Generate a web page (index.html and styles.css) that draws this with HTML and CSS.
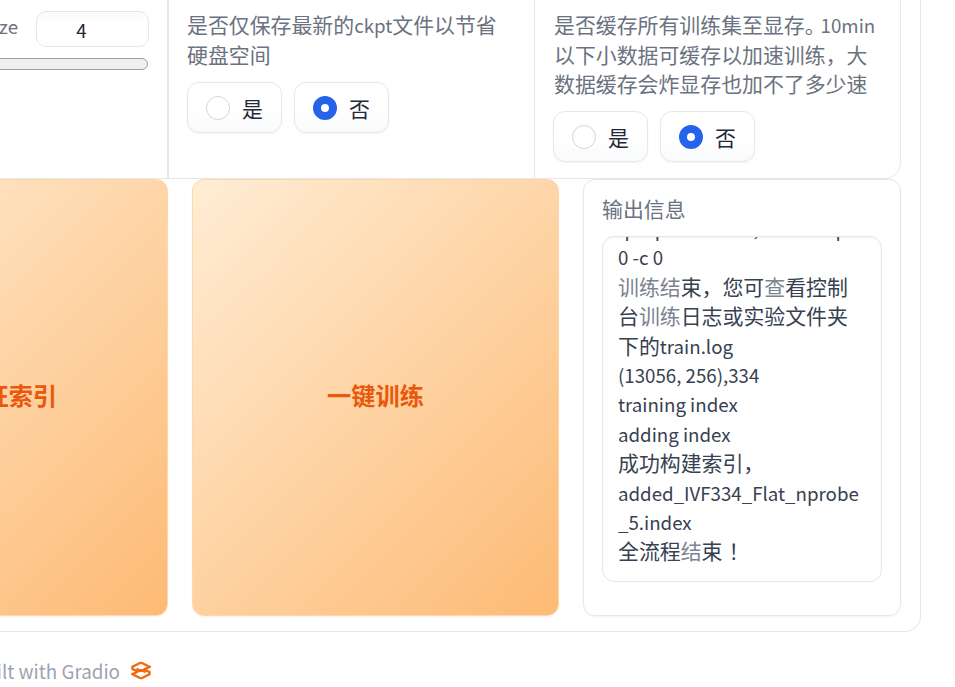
FILE: index.html
```html
<!DOCTYPE html>
<html lang="zh">
<head>
<meta charset="utf-8">
<title>Gradio</title>
<link rel="stylesheet" href="styles.css">
</head>
<body>
<main class="panel">
  <section class="settings">
    <div class="cell cell-slider">
      <div class="slider-head">
        <span class="slider-label">batch_size</span>
        <input class="number" type="text" value="4">
      </div>
      <div class="track"></div>
    </div>
    <div class="cell cell-mid">
      <p class="info">是否仅保存最新的<span class="en">ckpt</span>文件以节省硬盘空间</p>
      <div class="radios">
        <label class="radio"><span class="dot"></span>是</label>
        <label class="radio"><span class="dot on"></span>否</label>
      </div>
    </div>
    <div class="cell cell-last">
      <p class="info">是否缓存所有训练集至显存<span class="stop">。</span><span class="en">10min</span>以下小数据可缓存以加速训练，大数据缓存会炸显存也加不了多少速</p>
      <div class="radios">
        <label class="radio"><span class="dot"></span>是</label>
        <label class="radio"><span class="dot on"></span>否</label>
      </div>
    </div>
  </section>
  <section class="actions">
    <button class="big">训练特征索引</button>
    <button class="big">一键训练</button>
    <div class="output">
      <span class="out-label">输出信息</span>
      <div class="log">
        <div class="log-inner"><span class="en">-p 0 p 00000000, 0000000p</span>
<span class="en">0 -c 0</span>
<span class="thin">训练结</span>束，您可<span class="thin">查</span>看控制
台<span class="thin">训练</span>日志或实验文件夹
下的<span class="en">train.log</span>
<span class="en">(13056, 256),334</span>
<span class="en">training index</span>
<span class="en">adding index</span>
成功构建索引，
<span class="en">added_IVF334_Flat_nprobe</span>
<span class="en">_5.index</span>
全流程<span class="thin">结</span>束<span class="bang">！</span></div>
      </div>
    </div>
  </section>
</main>
<footer class="foot">
  <span class="built">Built with Gradio</span>
  <svg class="logo" width="20" height="19" viewBox="0 0 20 19" fill="none" stroke="#f2690d" stroke-width="2.400">
    <path d="M10 1.500 18.500 5.800 10 10 5.500 7.800"/>
    <path d="M10 17.500 1.500 13.200 10 9 14.500 11.200"/>
    <path d="M10 1.500 1.500 5.800 1.500 8 6 10.200"/>
    <path d="M10 17.500 18.500 13.200 18.500 11 14 8.800"/>
  </svg>
</footer>
</body>
</html>
```

FILE: styles.css
```css
* { box-sizing: border-box; }
html, body { margin: 0; height: 687px; overflow: hidden; background: #fff; }
body {
  font-family: "Noto Sans CJK JP", "Noto Sans CJK SC", "Noto Sans", sans-serif;
  font-size: 20.900px;
  color: #1f2937;
}
.en { font-size: 18.700px; line-height: 1; }
.thin { color: #7b8290; }
.stop { margin-right: -5px; }
.bang { margin-left: 6px; }
.panel {
  width: 1120px;
  margin: -20px 0 0 -199px;
  height: 652px;
  padding: 0 19px 15px 0;
  border: 1px solid #e5e7eb;
  border-width: 0 1px 1px 0;
  border-radius: 0 0 16px 0;
  display: flex;
  flex-direction: column;
}
.settings {
  display: flex;
  height: 199px;
  border: 1px solid #e5e7eb;
  border-radius: 0 0 16px 16px;
  flex: none;
}
.cell { padding: 29px 18px 0; min-width: 0; }
.cell-slider { flex: 0 0 365px; padding: 30px 18px 0 0; }
.cell-mid { flex: 0 0 367px; border-left: 2px solid #e5e7eb; }
.cell-last { flex: 1; border-left: 1px solid #e5e7eb; padding-left: 19px; }
.slider-head { display: flex; justify-content: flex-end; align-items: center; gap: 18px; }
.slider-label { color: #6b7280; font-size: 18.700px; position: relative; top: -4px; }
.number {
  width: 113px;
  height: 36px;
  padding: 0 22px 0 0;
  border: 1px solid #e5e7eb;
  border-radius: 10px;
  text-align: center;
  font: inherit;
  font-size: 18.700px;
  color: #1f2937;
  background: linear-gradient(#fbfbfc, #fff 40%);
}
.track {
  height: 12px;
  margin: 11px 1px 0 0;
  background: #efefef;
  border: 1px solid #a0a0a0;
  border-radius: 6px;
}
.info {
  margin: 0;
  color: #6b7280;
  line-height: 29.500px;
}
.radios { display: flex; gap: 12px; margin-top: 13px; }
.cell-last .radios { margin-left: -1px; margin-top: 12.500px; }
.radio {
  display: flex;
  align-items: center;
  gap: 12px;
  width: 95px;
  height: 51px;
  padding: 0 0 0 18px;
  border: 1px solid #e5e7eb;
  border-radius: 12px;
  background: linear-gradient(#fff 50%, #f9fafb);
  box-shadow: 0 1px 2px rgba(0,0,0,.05);
  color: #1f2937;
}
.dot {
  width: 24px;
  height: 24px;
  border-radius: 50%;
  border: 1px solid #d1d5db;
  background: #fff;
}
.dot.on { border: 8px solid #2563eb; }
.actions {
  display: flex;
  gap: 24px;
  flex: 1;
  min-height: 0;
}
.big {
  flex: 0 0 367px;
  padding: 0 0 6px;
  border: 1px solid #fed7aa;
  border-radius: 12px;
  background: linear-gradient(135deg, #ffedd5, #fdba74);
  color: #ea580c;
  font: inherit;
  font-size: 24.200px;
  font-weight: 700;
  box-shadow: 0 1px 2px rgba(0,0,0,.05);
}
.output {
  flex: 1;
  padding: 14px 18px 0;
  border: 1px solid #e5e7eb;
  border-radius: 12px;
  box-shadow: 0 1px 2px rgba(0,0,0,.05);
  display: flex;
  flex-direction: column;
}
.out-label { color: #6b7280; line-height: 29px; margin-bottom: 13px; }
.log {
  height: 346px;
  border: 1px solid #e5e7eb;
  border-radius: 12px;
  overflow: hidden;
  box-shadow: inset 0 1px 2px rgba(0,0,0,.05);
}
.log-inner {
  margin-top: -24px;
  padding: 0 15px;
  white-space: pre;
  line-height: 29.400px;
  color: #374151;
}
.foot {
  display: flex;
  align-items: center;
  gap: 11px;
  height: 35px;
  margin: 21px 0 0 -27px;
  color: #9ca3af;
  font-size: 18.800px;
}
```
